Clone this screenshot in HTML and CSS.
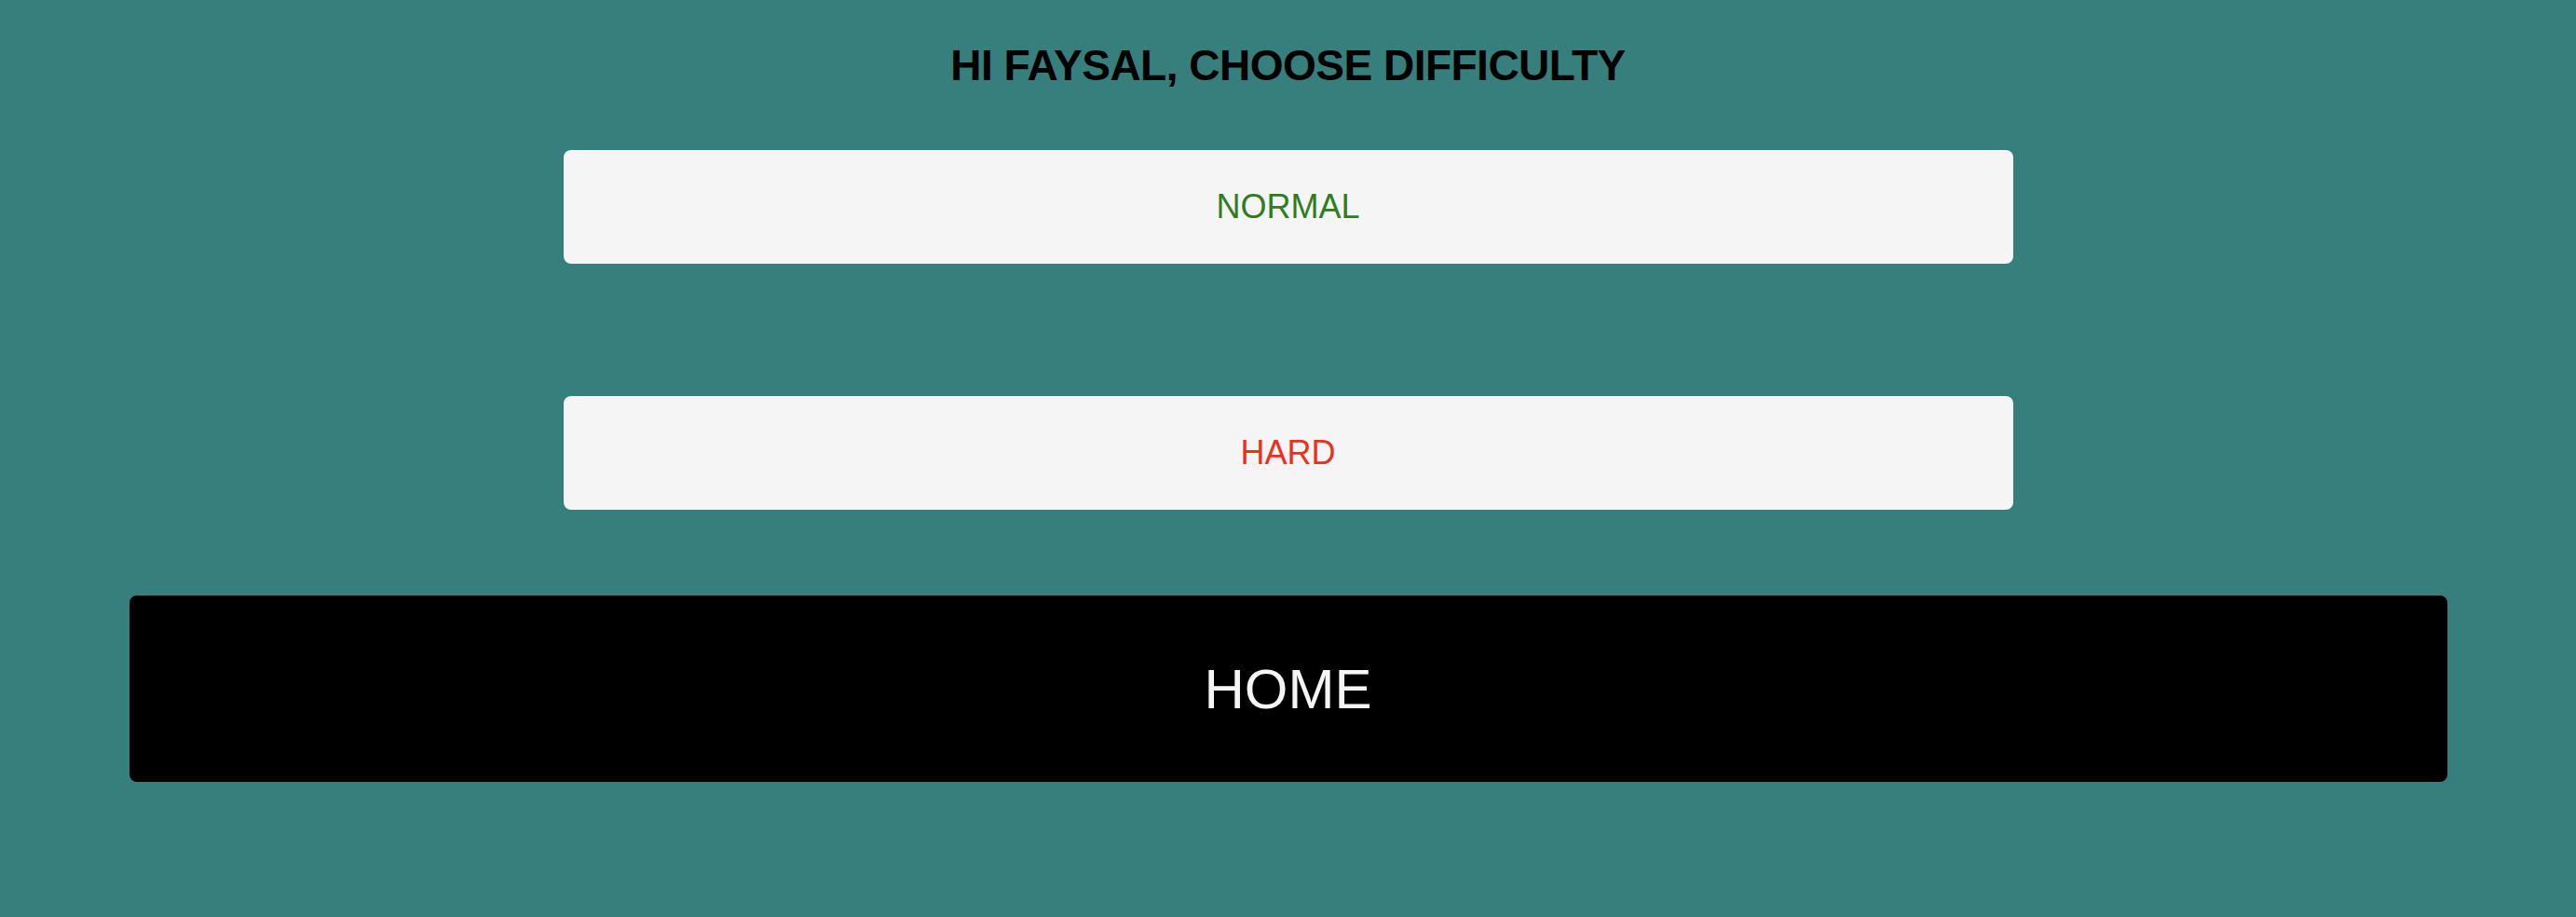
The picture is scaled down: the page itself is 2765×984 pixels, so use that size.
FILE: index.html
```html
<!DOCTYPE html>
<html lang="en">
<head>
<meta charset="utf-8">
<title>Choose Difficulty</title>
<link rel="stylesheet" href="styles.css">
</head>
<body>
<main class="page">
  <h1 class="title">HI FAYSAL, CHOOSE DIFFICULTY</h1>
  <div class="choices">
    <button class="choice choice-normal">NORMAL</button>
    <button class="choice choice-hard">HARD</button>
  </div>
  <button class="home">HOME</button>
</main>
</body>
</html>
```
FILE: styles.css
```css
html, body {
  margin: 0;
  padding: 0;
}
body {
  background: #377f7d;
  min-height: 984px;
  font-family: "Liberation Sans", Arial, sans-serif;
}
.page {
  display: flex;
  flex-direction: column;
  align-items: center;
  padding-top: 47px;
}
.title {
  margin: 0;
  font-family: "Liberation Sans", Arial, sans-serif;
  font-weight: 700;
  font-size: 46px;
  line-height: 46px;
  color: #000;
  letter-spacing: -0.5px;
}
.choices {
  display: flex;
  flex-direction: column;
  gap: 142px;
  margin-top: 68px;
  width: 1556px;
}
.choice {
  display: flex;
  align-items: center;
  justify-content: center;
  height: 122px;
  border: none;
  border-radius: 8px;
  background: #f5f5f5;
  font-family: "Liberation Sans", Arial, sans-serif;
  font-size: 36px;
  padding: 0;
  cursor: pointer;
}
.choice-normal {
  color: #2f7d1f;
}
.choice-hard {
  color: #e8321f;
}
.home {
  display: flex;
  align-items: center;
  justify-content: center;
  margin-top: 92px;
  width: 2488px;
  height: 200px;
  border: none;
  border-radius: 8px;
  background: #000;
  color: #f5f5f5;
  font-family: "Liberation Sans", Arial, sans-serif;
  font-size: 60px;
  padding: 0;
  cursor: pointer;
}
```
